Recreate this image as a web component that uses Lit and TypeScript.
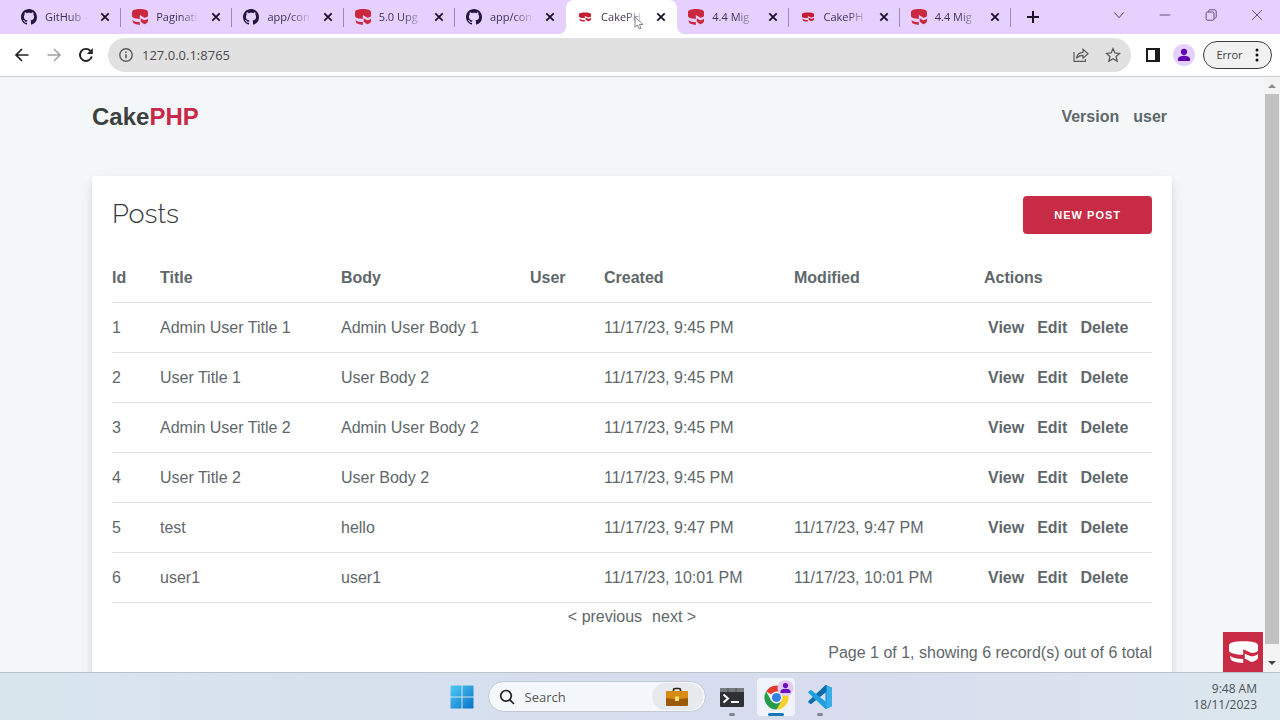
import { LitElement, html, svg, css, nothing } from "lit";
import { customElement, property } from "lit/decorators.js";

type Favicon = "github" | "cake" | "cake-small";

interface Tab {
  icon: Favicon;
  title: string;
  active?: boolean;
}

interface Post {
  id: number;
  title: string;
  body: string;
  created: string;
  modified: string;
}

const TABS: Tab[] = [
  { icon: "github", title: "GitHub -" },
  { icon: "cake", title: "Paginati" },
  { icon: "github", title: "app/con" },
  { icon: "cake", title: "5.0 Upg" },
  { icon: "github", title: "app/con" },
  { icon: "cake-small", title: "CakePH", active: true },
  { icon: "cake", title: "4.4 Mig" },
  { icon: "cake-small", title: "CakePH" },
  { icon: "cake", title: "4.4 Mig" },
];

const POSTS: Post[] = [
  { id: 1, title: "Admin User Title 1", body: "Admin User Body 1", created: "11/17/23, 9:45 PM", modified: "" },
  { id: 2, title: "User Title 1", body: "User Body 2", created: "11/17/23, 9:45 PM", modified: "" },
  { id: 3, title: "Admin User Title 2", body: "Admin User Body 2", created: "11/17/23, 9:45 PM", modified: "" },
  { id: 4, title: "User Title 2", body: "User Body 2", created: "11/17/23, 9:45 PM", modified: "" },
  { id: 5, title: "test", body: "hello", created: "11/17/23, 9:47 PM", modified: "11/17/23, 9:47 PM" },
  { id: 6, title: "user1", body: "user1", created: "11/17/23, 10:01 PM", modified: "11/17/23, 10:01 PM" },
];

const cakeShape = svg`
  <path d="M0 13C0 4 18 0 44 0s44 4 44 13v15c0 4-9 8-20 8L43 25v16C20 41 0 36 0 29z"/>
  <path d="M3 45c9 6 22 9 40 9v12C25 65 6 61 5 54z"/>
  <path d="M48 38l18 8c9 0 17-3 22-7v12c-2 6-11 11-21 12L48 53z"/>`;

const githubIcon = html`<svg width="16" height="16" viewBox="0 0 16 16" fill="#24163a" aria-hidden="true">
  <path d="M8 0C3.58 0 0 3.58 0 8c0 3.54 2.29 6.53 5.47 7.59.4.07.55-.17.55-.38 0-.19-.01-.82-.01-1.49-2.01.37-2.53-.49-2.69-.94-.09-.23-.48-.94-.82-1.13-.28-.15-.68-.52-.01-.53.63-.01 1.08.58 1.23.82.72 1.21 1.87.87 2.33.66.07-.52.28-.87.51-1.07-1.78-.2-3.64-.89-3.64-3.95 0-.87.31-1.59.82-2.15-.08-.2-.36-1.02.08-2.12 0 0 .67-.21 2.2.82.64-.18 1.32-.27 2-.27s1.36.09 2 .27c1.53-1.04 2.2-.82 2.2-.82.44 1.1.16 1.92.08 2.12.51.56.82 1.27.82 2.15 0 3.07-1.87 3.75-3.65 3.95.29.25.54.73.54 1.48 0 1.07-.01 1.93-.01 2.2 0 .21.15.46.55.38A8.01 8.01 0 0 0 16 8c0-4.42-3.58-8-8-8z"/>
</svg>`;

const cakeIcon = html`<svg width="16" height="16" viewBox="0 0 88 66" preserveAspectRatio="none" fill="#c9283f" aria-hidden="true">${cakeShape}</svg>`;
const cakeSmallIcon = html`<svg width="16" height="16" viewBox="-14 -25 116 116" fill="#c41e33" aria-hidden="true">${cakeShape}</svg>`;

const favicon = (kind: Favicon) =>
  kind === "github" ? githubIcon : kind === "cake" ? cakeIcon : cakeSmallIcon;

const lineIcon = (size: number, body: unknown) =>
  html`<svg width=${size} height=${size} viewBox="0 0 16 16" fill="none" stroke="currentColor" aria-hidden="true">${body}</svg>`;

@customElement("browser-tab")
class BrowserTab extends LitElement {
  @property({ attribute: false }) tab!: Tab;

  static styles = css`
    :host { display: block; flex: 1 1 0; min-width: 0; }
    .tab {
      display: flex; align-items: center; height: 34px; box-sizing: border-box;
      padding: 0 8px 0 11px; color: #3d3150; position: relative;
    }
    .tab.divided::after {
      content: ""; position: absolute; right: 0; top: 8px; height: 19px; width: 1px; background: #9d8bb2;
    }
    .tab.active { background: #fff; border-radius: 8px 8px 0 0; }
    .tab.active::before, .tab.active::after {
      content: ""; position: absolute; bottom: 0; width: 8px; height: 8px;
    }
    .tab.active::before { left: -8px; background: radial-gradient(circle at 0 0, transparent 8px, #fff 8px); }
    .tab.active::after { right: -8px; background: radial-gradient(circle at 100% 0, transparent 8px, #fff 8px); }
    .icon { display: flex; flex: none; }
    .title {
      flex: 1; min-width: 0; margin: 0 4px 0 8px; white-space: nowrap;
      -webkit-mask-image: linear-gradient(90deg, #000 24px, transparent 44px); mask-image: linear-gradient(90deg, #000 24px, transparent 44px);
    }
    .close {
      display: flex; flex: none; border: 0; padding: 3px; background: none; color: #1c1029;
    }
  `;

  render() {
    const t = this.tab;
    return html`<div class="tab ${t.active ? "active" : this.hasAttribute("divided") ? "divided" : ""}">
      <span class="icon">${favicon(t.icon)}</span>
      <span class="title">${t.title}</span>
      <button class="close" aria-label="Close tab">
        <svg width="10" height="10" viewBox="0 0 10 10" stroke="currentColor" stroke-width="1.8" fill="none"><path d="M1.3 1.3l7.4 7.4M8.7 1.3L1.3 8.7"/></svg>
      </button>
    </div>`;
  }
}

@customElement("browser-chrome")
class BrowserChrome extends LitElement {
  static styles = css`
    :host { display: block; font: 12px/18px "Open Sans", "Noto Sans", sans-serif; }
    .strip { display: flex; height: 34px; padding-left: 10px; background: #e5d0fe; }
    .tabs { display: flex; flex: 0 1 1001px; min-width: 0; font-size: 11px; }
    button { display: flex; align-items: center; justify-content: center; border: 0; padding: 0; background: none; color: #222; }
    .new { width: 44px; color: #1c1029; }
    .window { display: flex; margin-left: auto; padding-bottom: 5px; }
    .window button { width: 46px; color: #3a2950; }
    .bar { display: flex; align-items: center; height: 42px; background: #fff; border-bottom: 1px solid #c9cccd; }
    .nav { display: flex; gap: 16px; padding: 0 14px; }
    .nav .off { color: #a0a0a0; }
    .address {
      display: flex; align-items: center; flex: 1; min-width: 0; height: 34px; box-sizing: border-box;
      padding: 0 10px; border-radius: 17px; background: #e1e1e1; color: #5b5b5b;
    }
    .address input {
      flex: 1; min-width: 0; border: 0; padding: 0; background: none; outline: 0;
      margin-left: 8px; font: 13px/20px "Open Sans", sans-serif; color: #4a4a4a;
    }
    .address .tools { display: flex; gap: 16px; }
    .address button { color: #5b5b5b; }
    .right { display: flex; align-items: center; gap: 8px; padding: 0 8px 0 14px; }
    .menu {
      width: 69px; height: 28px; box-sizing: border-box; gap: 12px; border: 1px solid #3c3c3c; border-radius: 14px;
      background: #f1f1f1; color: #3f3f3f; font: inherit; font-size: 11px;
    }
  `;

  render() {
    return html`
      <header class="strip">
        <div class="tabs">
          ${TABS.map((tab, i) => html`<browser-tab .tab=${tab} ?divided=${!TABS[i + 1]?.active}></browser-tab>`)}
        </div>
        <button class="new" aria-label="New tab">
          <svg width="12" height="12" viewBox="0 0 12 12" stroke="currentColor" stroke-width="2"><path d="M6 0v12M0 6h12"/></svg>
        </button>
        <div class="window">
          <button aria-label="Search tabs">${lineIcon(14, svg`<path d="M2.500 5l5.500 6 5.500-6"/>`)}</button>
          <button aria-label="Minimize">${lineIcon(12, svg`<path d="M1 8h14"/>`)}</button>
          <button aria-label="Restore">${lineIcon(12, svg`<rect x="1.500" y="4" width="10.500" height="11" rx="2"/><path d="M4.500 3.500C4.500 2 5.500 1 7 1h5c2 0 3 1 3 3v6c0 1.500-1 2.500-2.500 2.500"/>`)}</button>
          <button aria-label="Close">${lineIcon(12, svg`<path d="M1.500 1.500l13 13M14.500 1.500l-13 13"/>`)}</button>
        </div>
      </header>
      <div class="bar">
        <nav class="nav">
          <button aria-label="Back">${lineIcon(16, svg`<path stroke-width="1.700" d="M14.500 8H2M8 2L2 8l6 6"/>`)}</button>
          <button class="off" aria-label="Forward">${lineIcon(16, svg`<path stroke-width="1.500" d="M1.500 8H14M8 2l6 6-6 6"/>`)}</button>
          <button aria-label="Reload">${lineIcon(16, svg`<path stroke-width="1.900" d="M13.800 9.500A6 6 0 1 1 12.300 3.700"/><path fill="currentColor" stroke="none" d="M14.800 1v6H8.800z"/>`)}</button>
        </nav>
        <div class="address">
          ${lineIcon(16, svg`<circle cx="8" cy="8" r="6.200" stroke-width="1.400"/><path stroke-width="1.600" d="M8 7.200v4M8 4.500v1.600"/>`)}
          <input type="text" aria-label="Address" value="127.0.0.1:8765">
          <div class="tools">
            <button aria-label="Share">${lineIcon(16, svg`<path stroke-width="1.200" d="M1 5v9.400h11.500V12M3.500 11.500C4 7.500 6.500 5.500 10 5.300V2.300L15 6.800l-5 4.400V8.300c-3 0-5 1-6.500 3.200z"/>`)}</button>
            <button aria-label="Bookmark">${lineIcon(16, svg`<path stroke-width="1.300" d="M8 1.600l1.900 4.300 4.700.5-3.500 3.100 1 4.600L8 11.700l-4.100 2.400 1-4.600L1.400 6.400l4.700-.5z"/>`)}</button>
          </div>
        </div>
        <div class="right">
          <button aria-label="Side panel"><svg width="20" height="16" viewBox="0 0 20 16"><path fill="#1b1b1b" d="M1 1h14v14H1z"/><path fill="#fff" d="M3 3h7v10H3z"/></svg></button>
          <button aria-label="Profile"><svg width="22" height="22" viewBox="0 0 22 22"><circle cx="11" cy="11" r="11" fill="#e5d0fe"/><g fill="#6200b3"><circle cx="11" cy="7.800" r="3.100"/><path d="M5 17v-2c0-2.200 3.500-3.200 6-3.200s6 1 6 3.200v2z"/></g></svg></button>
          <button class="menu"><span>Error</span><svg width="4" height="14" viewBox="0 0 4 14" fill="#111"><circle cx="2" cy="2" r="1.500"/><circle cx="2" cy="7" r="1.500"/><circle cx="2" cy="12" r="1.500"/></svg></button>
        </div>
      </div>`;
  }
}

@customElement("posts-page")
class PostsPage extends LitElement {
  static styles = css`
    :host {
      display: block; height: 100%; overflow: hidden; background: #f4f7f8; color: #60676b;
      font: 16px/25px "Liberation Sans", Arial, sans-serif;
    }
    a { color: #60676b; text-decoration: none; }
    .container { max-width: 1080px; margin: 0 auto; padding: 0 20px; }
    .top { display: flex; align-items: center; justify-content: space-between; padding: 20px 5px 40px 0; }
    .brand { font-size: 24px; line-height: 39px; font-weight: 700; color: #3d3f41; }
    .brand span { color: #c9284a; }
    .links { display: flex; gap: 14px; font-weight: 700; }
    .card { background: #fff; padding: 20px; border-radius: 4px 4px 0 0; box-shadow: 0 7px 14px rgba(60, 66, 87, 0.1), 0 3px 6px rgba(0, 0, 0, 0.07); }
    .head { display: flex; align-items: flex-start; justify-content: space-between; height: 57px; }
    h1 { margin: 0; font: 300 27px/35px Raleway, Lato, sans-serif; color: #363637; }
    .create {
      display: block; box-sizing: border-box; height: 38px; padding: 0 31px; border-radius: 4px; background: #c72b45; color: #fff;
      font-size: 11px; line-height: 38px; font-weight: 700; letter-spacing: 1px; text-transform: uppercase;
    }
    table { width: 100%; table-layout: fixed; border-spacing: 0; }
    th, td { padding: 12px; text-align: left; border-bottom: 1px solid #e1e1e1; white-space: nowrap; }
    th:first-child, td:first-child { padding-left: 0; padding-right: 0; }
    .id { width: 36px; }
    .title { width: 181px; }
    .body { width: 189px; }
    .user { width: 74px; }
    .date { width: 190px; }
    .act { width: 180px; }
    .actions { padding-left: 16px; font-weight: 700; }
    .row-links { display: flex; gap: 13px; }
    .pager { display: flex; justify-content: center; gap: 10px; line-height: 27px; }
    .count { margin: 10px 0 0; text-align: right; }
  `;

  render() {
    return html`
      <div class="container">
        <nav class="top">
          <a class="brand" href="#">Cake<span>PHP</span></a>
          <div class="links"><a href="#">Version</a><a href="#">user</a></div>
        </nav>
        <main class="card">
          <div class="head"><h1>Posts</h1><a class="create" href="#">New Post</a></div>
          <table>
            <colgroup>
              <col class="id"><col class="title"><col class="body"><col class="user"><col class="date"><col class="date"><col class="act">
            </colgroup>
            <thead>
              <tr>
                ${["Id", "Title", "Body", "User", "Created", "Modified"].map((h) => html`<th scope="col"><a href="#">${h}</a></th>`)}
                <th scope="col">Actions</th>
              </tr>
            </thead>
            <tbody>
              ${POSTS.map((p) => html`<tr>
                <td>${p.id}</td><td>${p.title}</td><td>${p.body}</td><td></td><td>${p.created}</td><td>${p.modified || nothing}</td>
                <td class="actions"><div class="row-links"><a href="#">View</a><a href="#">Edit</a><a href="#">Delete</a></div></td>
              </tr>`)}
            </tbody>
          </table>
          <nav class="pager"><a href="#">&lt; previous</a><a href="#">next &gt;</a></nav>
          <p class="count">Page 1 of 1, showing 6 record(s) out of 6 total</p>
        </main>
      </div>`;
  }
}

@customElement("task-bar")
class TaskBar extends LitElement {
  static styles = css`
    :host { display: block; font: 12px/16px "Open Sans", "Noto Sans", sans-serif; }
    .bar {
      display: grid; grid-template-columns: 1fr auto 1fr; align-items: center; height: 48px; box-sizing: border-box;
      border-top: 1px solid #b9c3cc; background: linear-gradient(90deg, #d9e5ed, #d6deee 45%, #d8dcee 65%, #dbe7ee);
    }
    .apps { display: flex; align-items: center; grid-column: 2; padding-left: 8px; }
    button { display: flex; border: 0; padding: 0; background: none; position: relative; }
    .search {
      display: flex; align-items: center; width: 218px; height: 31px; box-sizing: border-box; margin: 0 7px 0 14px;
      padding: 1px 2px 1px 10px; border: 1px solid #c3cad6; border-radius: 16px; background: #f4f7fb;
    }
    .search input {
      flex: 1; min-width: 0; border: 0; padding: 0; margin-left: 10px; background: none; outline: 0;
      font: 13px/18px "Open Sans", sans-serif; color: #555;
    }
    .search input::placeholder { color: #555; opacity: 1; }
    .badge { display: flex; align-items: center; justify-content: center; width: 51px; height: 27px; border-radius: 14px; background: #e6eaec; }
    .app { align-items: center; justify-content: center; width: 38px; height: 38px; margin-right: 6px; border-radius: 4px; }
    .app:last-child { margin-right: 0; }
    .app::after { content: ""; position: absolute; bottom: 0; width: 6px; height: 3px; border-radius: 2px; background: #818790; }
    .app.current { background: #f1f3fa; }
    .app.current::after { width: 16px; background: #1976b8; }
    .clock { justify-self: end; margin-right: 23px; text-align: right; color: #4c5157; }
  `;

  render() {
    return html`<footer class="bar">
      <div class="apps">
        <button aria-label="Start"><svg width="24" height="24" viewBox="0 0 24 24">
          <defs><linearGradient id="w" gradientUnits="userSpaceOnUse" x1="0" y1="0" x2="24" y2="24"><stop stop-color="#4fcdf6"/><stop offset="1" stop-color="#0670c5"/></linearGradient></defs>
          <path fill="url(#w)" d="M1 .5h10.500v11H.5V1zM12.500.5H23l.5.5v10.500h-11zM.5 12.500h11v11H1l-.5-.5zM12.500 12.500h11V23l-.5.5H12.500z"/></svg></button>
        <label class="search">
          <svg width="16" height="16" viewBox="0 0 16 16" fill="none" stroke="#222" stroke-width="1.700" aria-hidden="true"><circle cx="7" cy="6.800" r="5.300"/><path d="M10.900 10.800l4.100 4.200"/></svg>
          <input type="text" placeholder="Search" aria-label="Search">
          <span class="badge"><svg width="24" height="20" viewBox="0 0 24 20" aria-hidden="true">
            <path d="M8.500 4.500V3c0-1 .5-1.500 1.500-1.500h4c1 0 1.500.5 1.500 1.500v1.500" fill="none" stroke="#332411" stroke-width="1.700"/>
            <rect x="1" y="4" width="22" height="15" rx="1" fill="#9b5b0b"/><path d="M1 5c0-.6.4-1 1-1h20c.6 0 1 .4 1 1v6L12 12.500 1 11z" fill="#d78a14"/><rect x="10" y="9.500" width="4" height="4.500" fill="#ffe078"/></svg></span>
        </label>
        <button class="app" aria-label="Terminal"><svg width="24" height="20" viewBox="0 0 24 20">
          <rect width="24" height="19" y="1" rx="1" fill="#303136"/><path d="M0 2c0-.6.4-1 1-1h22c.6 0 1 .4 1 1v3H0z" fill="#777b80"/><path d="M8 1v4M16 1v4" stroke="#4c4e54"/>
          <path d="M3.500 7.500l4.500 4-4.500 4" fill="none" stroke="#fff" stroke-width="2"/><path d="M11 15h8" stroke="#fff" stroke-width="2"/></svg></button>
        <button class="app current" aria-label="Chrome"><svg width="36" height="36" viewBox="0 0 36 36">
          <path fill="#e33b2e" d="M18.500 18.500L8.100 12.500a12 12 0 0 1 20.800 0z"/>
          <path fill="#f9cf2d" d="M18.500 18.500V12.500h10.400a12 12 0 0 1-10.400 18z"/>
          <path fill="#279c4b" d="M18.500 18.500l5.200 3-5.200 9a12 12 0 0 1-10.400-18l5.200 9z"/>
          <circle cx="18.500" cy="18.500" r="6" fill="#fff"/><circle cx="18.500" cy="18.500" r="4.600" fill="#3581e6"/>
          <circle cx="27.500" cy="9" r="8" fill="#e2cbfa"/><g fill="#6a10bd"><circle cx="27.500" cy="6.500" r="2.600"/><path d="M22.500 14v-1.500c0-2 3-2.700 5-2.700s5 .7 5 2.700V14z"/></g></svg></button>
        <button class="app" aria-label="Code"><svg width="24" height="24" viewBox="0 0 24 24">
          <path fill="#1687cc" d="M17.500 0L24 3v18l-6.500 3z"/><path fill="#0b6bab" d="M17.500 0L24 3l-5.500 3.800L3.500 18.800c-.4.3-.9.3-1.300 0L.6 17.400c-.5-.4-.5-1.100 0-1.500z"/>
          <path fill="#1f9fe0" d="M17.500 24l6.500-3-5.500-3.800L3.500 5.200c-.4-.3-.9-.3-1.300 0L.6 6.600c-.5.4-.5 1.100 0 1.500z"/><path fill="#35aeea" d="M18.500 6.800V0L24 3v18l-5.500 3z"/></svg></button>
      </div>
      <div class="clock">9:48 AM<br>18/11/2023</div>
    </footer>`;
  }
}

@customElement("app-root")
class AppRoot extends LitElement {
  static styles = css`
    :host { display: block; }
    .screen { display: flex; flex-direction: column; height: 100vh; position: relative; overflow: hidden; }
    .view { display: flex; flex: 1; min-height: 0; position: relative; }
    .page { flex: 1; min-width: 0; }
    .scroll { display: flex; flex-direction: column; align-items: center; justify-content: space-between; width: 16px; background: #f3f3f3; }
    .scroll svg { flex: none; }
    .thumb { flex: 1; width: 14px; margin-bottom: 11px; background: #c1c1c1; }
    .debug { position: absolute; right: 17px; bottom: 0; display: flex; border: 0; padding: 9px 5px 9px 6px; background: #c72b45; }
    .cursor { position: absolute; left: 634px; top: 16px; }
  `;

  render() {
    return html`<div class="screen">
      <browser-chrome></browser-chrome>
      <div class="view">
        <posts-page class="page"></posts-page>
        <div class="scroll">
          <svg width="16" height="17" viewBox="0 0 16 17"><path d="M4 11l4-4 4 4z" fill="#8d8d8d"/></svg>
          <div class="thumb"></div>
          <svg width="16" height="17" viewBox="0 0 16 17"><path d="M4 6l4 4 4-4z" fill="#444"/></svg>
        </div>
        <button class="debug" aria-label="Debug Kit"><svg width="29" height="22" viewBox="0 0 88 66" fill="#fff">${cakeShape}</svg></button>
      </div>
      <task-bar></task-bar>
      <svg class="cursor" width="10" height="14" viewBox="0 0 10 14" aria-hidden="true"><path d="M1 1v10l2.500-2 1.700 4 1.800-.8-1.600-3.700H9z" fill="#fff" stroke="#777" stroke-width=".9"/></svg>
    </div>`;
  }
}
